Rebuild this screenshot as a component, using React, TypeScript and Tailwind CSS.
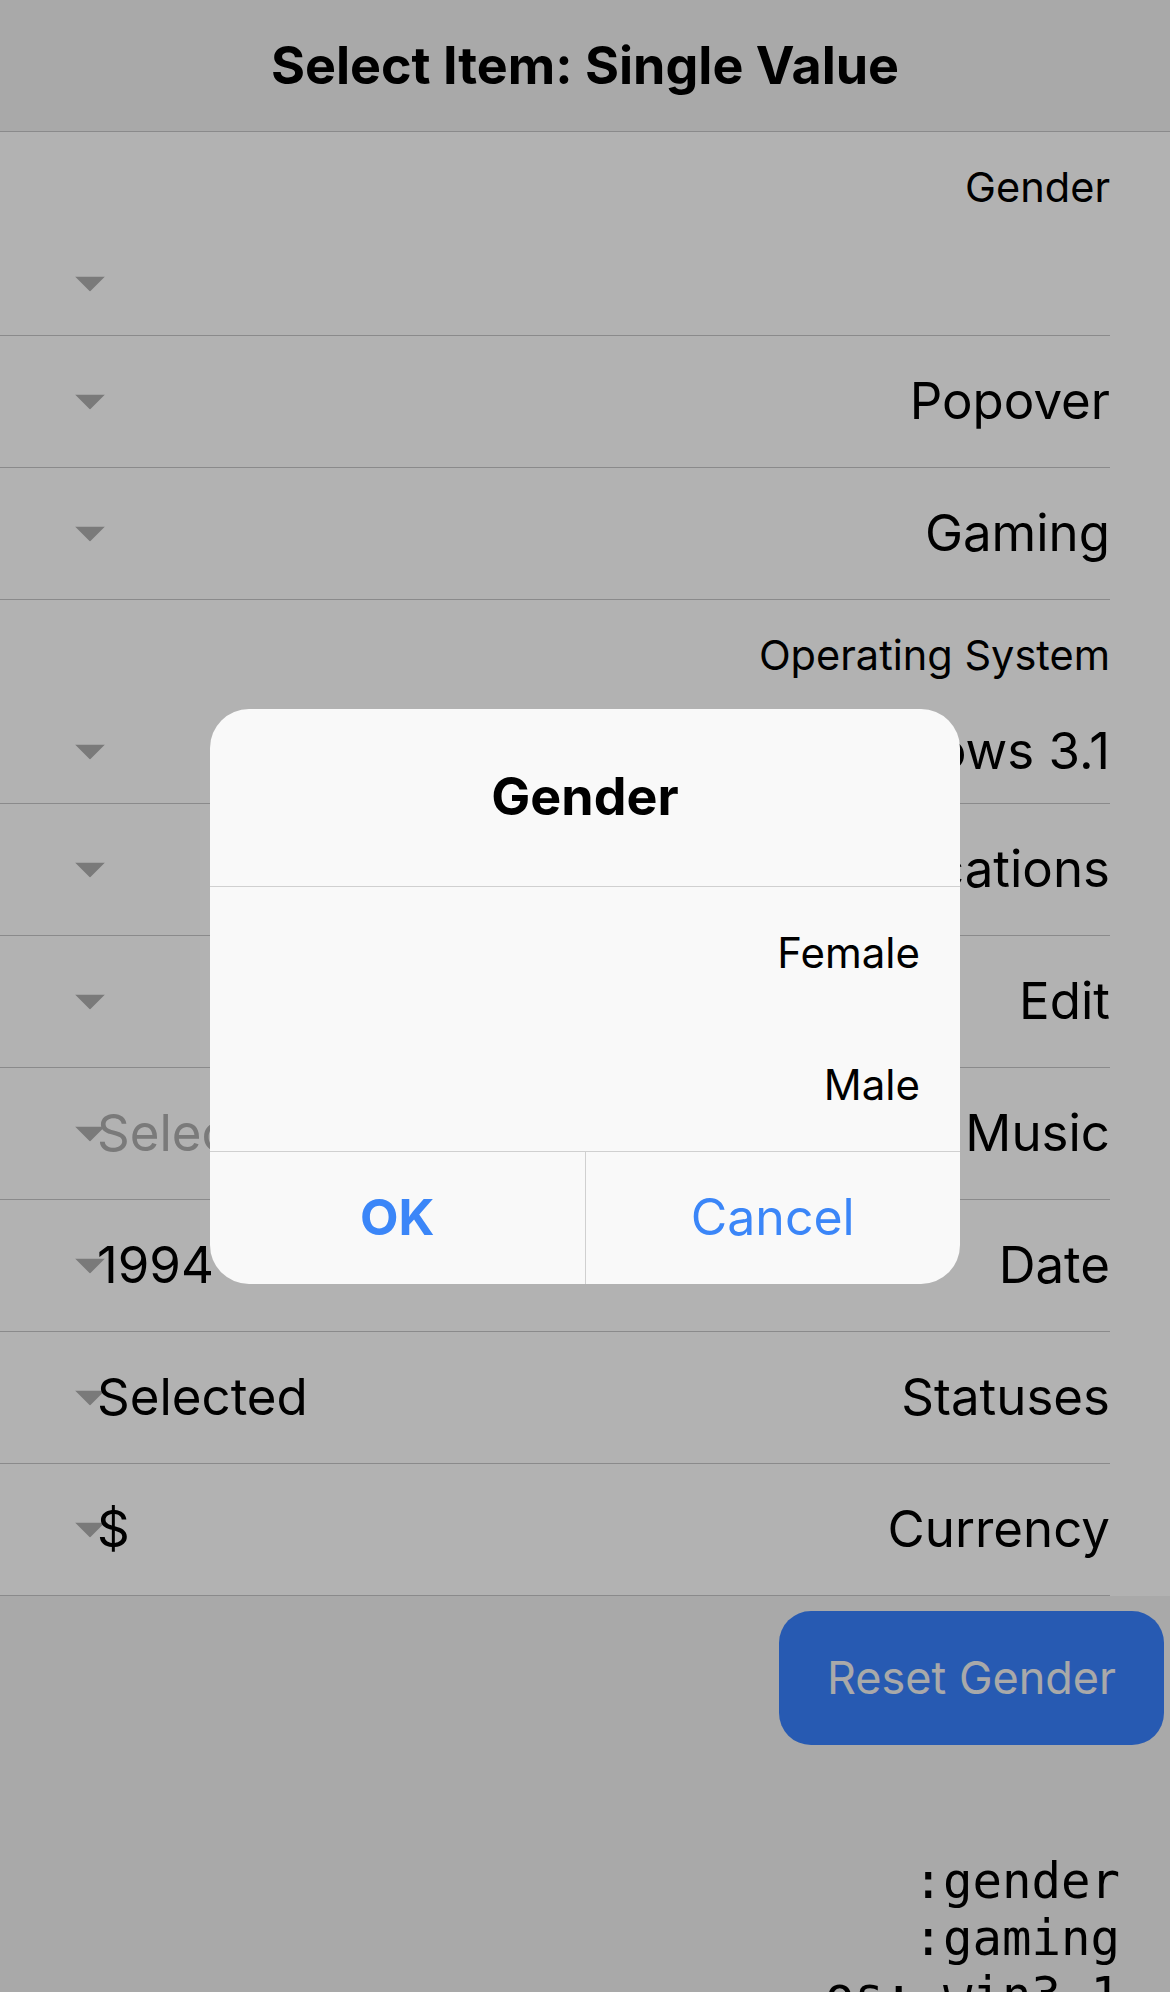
const rows: { left?: string; muted?: boolean; right: string; label?: string }[] = [
  { label: "Gender", right: "" },
  { right: "Popover" },
  { right: "Gaming" },
  { label: "Operating System", right: "Windows 3.1" },
  { right: "Notifications" },
  { right: "Edit" },
  { left: "Select...", muted: true, right: "Music" },
  { left: "1994-05-20 09:38", right: "Date" },
  { left: "Selected", right: "Statuses" },
  { left: "$", right: "Currency" },
];

function Caret() {
  return (
    <svg
      width="30"
      height="15"
      viewBox="0 0 30 15"
      className="absolute left-[75px] top-1/2 -translate-y-1/2"
    >
      <polygon points="0,0 30,0 15,15" fill="#afafaf" />
    </svg>
  );
}

function Row({ row }: { row: (typeof rows)[number] }) {
  if (row.label) {
    return (
      <div className="flex h-[204px] flex-col border-b border-[#c6c6c8]">
        <div className="h-[100px] pt-[31px] text-right text-[41.5px] leading-[48px]">
          {row.label}
        </div>
        <div className="relative flex h-[103px] items-center justify-end text-[51px]">
          <Caret />
          <span>{row.right}</span>
        </div>
      </div>
    );
  }
  return (
    <div className="relative flex h-[132px] items-center justify-between border-b border-[#c6c6c8] pl-[97px] text-[51px]">
      <Caret />
      <span className={row.muted ? "relative text-[#afafaf]" : "relative"}>
        {row.left}
      </span>
      <span>{row.right}</span>
    </div>
  );
}

export default function App() {
  return (
    <div className="relative h-[1992px] overflow-hidden bg-[#f2f2f2] font-['Inter',sans-serif] text-black">
      <div className="flex h-[132px] items-center justify-center border-b border-[#c6c6c8] text-[52px] font-bold">
        Select Item: Single Value
      </div>

      <div className="bg-white">
        <div className="mr-[60px]">
          {rows.map((row) => (
            <Row key={row.right + (row.label ?? "")} row={row} />
          ))}
        </div>
      </div>

      <div className="flex flex-col items-end">
        <button className="mr-[6px] mt-[15px] h-[134px] w-[385px] rounded-[32px] bg-[#3982ff] text-[45px] text-[#f2f2f2]">
          Reset Gender
        </button>
        <div className="mt-[108px] pr-[50px] text-right font-['DejaVu_Sans_Mono',monospace] text-[49px] leading-[57px]">
          <div>:gender</div>
          <div>:gaming</div>
          <div>os: win3.1</div>
        </div>
      </div>

      <div className="absolute inset-0 flex items-center justify-center bg-black/30">
        <div className="flex w-[750px] flex-col overflow-hidden rounded-[39px] bg-[#f9f9f9]">
          <div className="flex h-[178px] items-center justify-center border-b border-[#d0d0d0] text-[52px] font-bold">
            Gender
          </div>
          <div className="border-b border-[#d0d0d0] pr-[40px] text-right text-[42px]">
            <div className="flex h-[132px] items-center justify-end">Female</div>
            <div className="flex h-[132px] items-center justify-end">Male</div>
          </div>
          <div className="flex h-[132px] text-[50px] text-[#3b86f8]">
            <button className="flex-1 border-r border-[#d0d0d0] font-bold">OK</button>
            <button className="flex-1">Cancel</button>
          </div>
        </div>
      </div>
    </div>
  );
}
